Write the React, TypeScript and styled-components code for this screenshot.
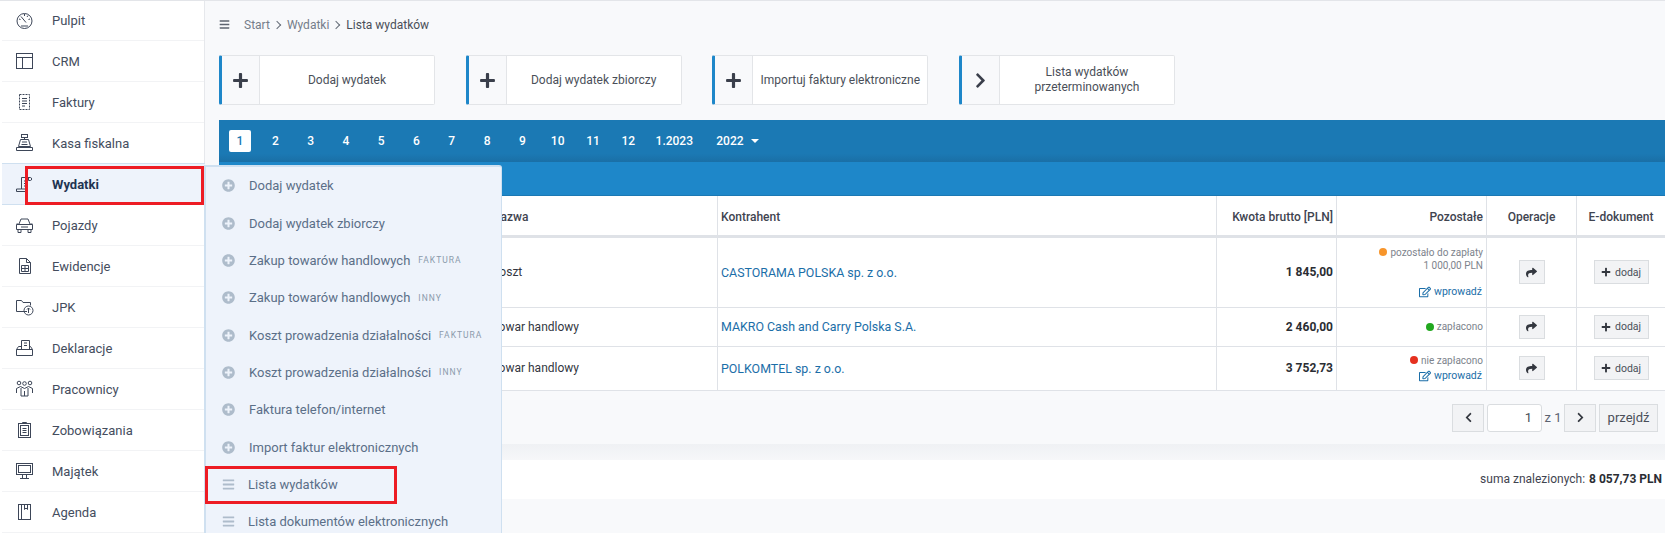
import * as React from "react";
import styled, { createGlobalStyle } from "styled-components";
import { FaPlus, FaPlusCircle, FaBars, FaShare, FaRegEdit, FaChevronLeft, FaChevronRight } from "react-icons/fa";

const GlobalStyle = createGlobalStyle`
    html, body {
        margin: 0;
        padding: 0;
        height: 533px;
        overflow: hidden;
        background: #f8f9fb;
    }
    body, button, input {
        font-family: Roboto, "Liberation Sans", sans-serif;
        font-size: 13px;
    }
`;

const Page = styled.div`
    display: flex;
    width: 1665px;
    height: 533px;
    overflow: hidden;
    position: relative;
    border-top: 1px solid #e3e5e9;
    box-sizing: border-box;
`;

const Sidebar = styled.nav`
    width: 205px;
    flex: none;
    box-sizing: border-box;
    background: #fff;
    border-right: 1px solid #e6e8ec;
    padding-left: 2px;
`;

const SideRow = styled.div<{ $active?: boolean }>`
    position: relative;
    height: 41px;
    box-sizing: border-box;
    display: flex;
    align-items: center;
    gap: 15px;
    padding-left: 10px;
    color: ${(p) => (p.$active ? "#1f3552" : "#444d5e")};
    font-weight: ${(p) => (p.$active ? 700 : 400)};
    background: ${(p) => (p.$active ? "#eef3fb" : "#fff")};
    border-bottom: 1px solid ${(p) => (p.$active ? "#cfe0f0" : "#f2f3f5")};
    box-shadow: ${(p) => (p.$active ? "0 -1px 0 #cfe0f0" : "none")};
    margin-right: ${(p) => (p.$active ? "-1px" : "0")};
    &:first-child {
        height: 40px;
    }
`;

const SideIcon = styled.svg`
    width: 25px;
    height: 20px;
    flex: none;
    fill: none;
    stroke: #3d4658;
    stroke-width: 1;
`;

const RedMark = styled.div<{ $left: number; $top: number; $width: number; $height: number }>`
    position: absolute;
    left: ${(p) => p.$left}px;
    top: ${(p) => p.$top}px;
    width: ${(p) => p.$width}px;
    height: ${(p) => p.$height}px;
    box-sizing: border-box;
    border: 3px solid #ed1c24;
    pointer-events: none;
    z-index: 5;
`;

const Main = styled.main`
    flex: 1;
    min-width: 0;
    padding-left: 14px;
    display: flex;
    flex-direction: column;
`;

const Breadcrumb = styled.div`
    height: 47px;
    display: flex;
    align-items: center;
    font-size: 12px;
    svg {
        color: #5d6470;
        font-size: 11px;
        margin-right: 14px;
    }
`;

const Crumb = styled.span<{ $current?: boolean }>`
    color: ${(p) => (p.$current ? "#4a4f59" : "#757d8a")};
`;

const CrumbSep = styled.span`
    margin: 0 7px 0 4px;
    width: 5px;
    height: 5px;
    border-top: 1px solid #666d78;
    border-right: 1px solid #666d78;
    transform: rotate(45deg);
`;

const Actions = styled.div`
    display: flex;
    gap: 30.67px;
    margin-top: 7px;
`;

const ActionButton = styled.div`
    width: 216px;
    height: 50px;
    box-sizing: border-box;
    display: flex;
    background: #fff;
    border: 1px solid #e3e5e8;
    border-left: 3px solid #1e87c9;
    border-radius: 2px;
    color: #4a4f59;
`;

const ActionIcon = styled.div`
    width: 37px;
    flex: none;
    display: flex;
    align-items: center;
    justify-content: center;
    background: #f8f9fb;
    border-right: 1px solid #e3e5e8;
    color: #3a3f4b;
    font-size: 17px;
`;

const ActionLabel = styled.div`
    flex: 1;
    display: flex;
    align-items: center;
    justify-content: center;
    text-align: center;
    font-size: 12px;
    line-height: 15px;
    padding: 0 4px;
`;

const MonthBar = styled.div`
    margin-top: 15px;
    height: 42px;
    flex: none;
    box-sizing: border-box;
    background: linear-gradient(#1b79b4 0, #1b79b4 80%, #1a6fa6 100%);
    display: flex;
    align-items: center;
    gap: 13.3px;
    padding-left: 10px;
    color: #fff;
    font-size: 12px;
    font-weight: 500;
`;

const Month = styled.div<{ $active?: boolean }>`
    min-width: 22px;
    height: 22px;
    padding: 0 3px;
    box-sizing: border-box;
    display: flex;
    align-items: center;
    justify-content: center;
    border-radius: 2px;
    background: ${(p) => (p.$active ? "#fff" : "transparent")};
    color: ${(p) => (p.$active ? "#1b79b4" : "#fff")};
`;

const YearToggle = styled.div`
    display: flex;
    align-items: center;
    gap: 7px;
    margin-left: 7px;
    &::after {
        content: "";
        border-left: 4px solid transparent;
        border-right: 4px solid transparent;
        border-top: 4px solid #fff;
    }
`;

const TableHead = styled.div`
    height: 34px;
    flex: none;
    background: #1e87c9;
    border-bottom: 1px solid #1b78b3;
    box-sizing: border-box;
`;

const Table = styled.table`
    table-layout: fixed;
    width: 1446px;
    flex: none;
    border-collapse: collapse;
    background: #fff;
    color: #33373f;
    font-size: 12px;
`;

const Th = styled.th<{ $align?: string }>`
    height: 40px;
    padding: 3px 3px 0;
    box-sizing: border-box;
    font-weight: 500;
    color: #3f4450;
    text-align: ${(p) => p.$align || "left"};
    border: solid #dfe2e7;
    border-width: 0 1px 3px 1px;
    font-size: 12px;
`;

const Td = styled.td<{ $align?: string; $height: number }>`
    height: ${(p) => p.$height}px;
    padding: 0 3px;
    text-align: ${(p) => p.$align || "left"};
    border: 1px solid #dfe2e7;
    border-top: 0;
`;

const PartnerLink = styled.span`
    color: #1b6ea8;
    font-size: 12.4px;
`;

const Amount = styled.span`
    font-weight: 700;
    color: #2a2d33;
`;

const StatusLine = styled.div`
    display: flex;
    justify-content: flex-end;
    align-items: center;
    gap: 3px;
    color: #7d838c;
    font-size: 10px;
    line-height: 13px;
`;

const Dot = styled.span<{ $color: string }>`
    width: 8px;
    height: 8px;
    border-radius: 50%;
    background: ${(p) => p.$color};
`;

const EnterLink = styled.div<{ $gap: number }>`
    display: flex;
    justify-content: flex-end;
    align-items: center;
    gap: 3px;
    margin-top: ${(p) => p.$gap}px;
    padding-right: 1px;
    color: #1b6ea8;
    font-size: 10.5px;
    line-height: 14px;
    svg {
        font-size: 12px;
    }
`;

const Btn = styled.div`
    display: inline-flex;
    align-items: center;
    justify-content: center;
    box-sizing: border-box;
    background: #f2f3f5;
    border: 1px solid #dadde0;
    color: #33373f;
    vertical-align: middle;
`;

const ShareBtn = styled(Btn)`
    width: 26px;
    height: 24px;
    font-size: 11px;
`;

const AddBtn = styled(Btn)`
    width: 55px;
    height: 24px;
    gap: 4px;
    font-size: 10.5px;
    color: #4a4f59;
    svg {
        font-size: 10px;
        color: #33373f;
    }
`;

const Pager = styled.div`
    height: 53px;
    flex: none;
    display: flex;
    align-items: center;
    justify-content: flex-end;
    gap: 3px;
    padding-right: 7px;
    padding-top: 1px;
    box-sizing: border-box;
    color: #5b6270;
`;

const PagerBtn = styled(Btn)<{ $wide?: boolean }>`
    width: ${(p) => (p.$wide ? 59 : 32)}px;
    height: 28px;
    font-size: ${(p) => (p.$wide ? 13 : 11)}px;
    color: ${(p) => (p.$wide ? "#4a4f59" : "#33373f")};
`;

const PageInput = styled.div`
    width: 55px;
    height: 28px;
    box-sizing: border-box;
    background: #fff;
    border: 1px solid #dadde0;
    border-radius: 3px;
    display: flex;
    align-items: center;
    justify-content: flex-end;
    padding-right: 9px;
    color: #4a4f59;
`;

const PagerOf = styled.span`
    margin: 0 -0.5px;
`;

const Fade = styled.div`
    height: 16px;
    flex: none;
    background: linear-gradient(#eff1f4, #f6f7f9);
`;

const Summary = styled.div`
    height: 39px;
    flex: none;
    background: #fff;
    display: flex;
    align-items: center;
    justify-content: flex-end;
    padding-right: 3px;
    font-size: 12px;
    color: #3f4450;
    b {
        margin-left: 4px;
        color: #2a2d33;
    }
`;

const Flyout = styled.div`
    position: absolute;
    left: 204px;
    top: 164px;
    width: 298px;
    height: 380px;
    box-sizing: border-box;
    background: #eef3fb;
    border: 2px solid #cfe0f0;
    border-right-width: 1px;
    border-radius: 0 3px 0 0;
    z-index: 3;
`;

const FlyItem = styled.div<{ $list?: boolean }>`
    height: 37.35px;
    display: flex;
    align-items: center;
    padding-left: 16px;
    color: #5b6f88;
    svg {
        flex: none;
        width: 13px;
        height: 13px;
        color: #aebccb;
        margin-right: ${(p) => (p.$list ? 13 : 14)}px;
    }
`;

const FlyTag = styled.span`
    margin-left: 8px;
    font-size: 8.5px;
    letter-spacing: 1px;
    color: #8b9aab;
`;

const icons: Record<string, React.ReactNode> = {
    pulpit: (
        <>
            <circle cx="12.5" cy="10" r="7.5" />
            <path d="M9 5.5l5 6M9 15h7M7 8l1.5.5M18 8l-1.5.5M12.5 3v2M16 4.5l-1 1.5" />
        </>
    ),
    crm: (
        <>
            <rect x="4.5" y="2.5" width="16" height="15" />
            <path d="M4.5 6.5h16M10.5 6.5v11" />
        </>
    ),
    faktury: (
        <>
            <rect x="7.5" y="2.5" width="10" height="15" strokeDasharray="2 1" />
            <path d="M10 6.5h5M10 9h5M10 11.5h5M10 14h3" />
        </>
    ),
    kasa: (
        <>
            <rect x="9.5" y="1.5" width="6" height="3" />
            <path d="M12.5 4.5v2M8.5 6.5h8l2 7h-12zM4.5 14.5h16v3h-16zM10 9h5M9.5 11.5h6" />
        </>
    ),
    wydatki: (
        <>
            <path d="M9.5 15V3.5h9M18.5 3.5c1.5 0 1.5 3 0 3h-2V3.5M9.5 15H4.5v2.5h9c1 0 1-2.5 0-2.5zM12 7h3M12 9.5h3M12 12h3" />
        </>
    ),
    pojazdy: (
        <>
            <path d="M7 9l2-5h7l2 5M4.5 9.5h16v5h-16zM6 14.5v3h3v-3M16 14.5v3h3v-3M4.5 9h2M18.5 9h2M9 12h7" />
        </>
    ),
    ewidencje: (
        <>
            <path d="M7.5 2.5h7l4 4v11h-11zM14.5 2.5v4h4M9.5 9.5h7v6h-7zM9.5 12.5h7M13 9.5v6" />
        </>
    ),
    jpk: (
        <>
            <path d="M15 14.5H4.5v-11h5l1.5 2h7.5v3" />
            <circle cx="16.5" cy="13.5" r="4.5" />
            <path d="M16.5 16v-5M15 12.5l1.5-1.5 1.5 1.5" />
        </>
    ),
    deklaracje: (
        <>
            <path d="M9.5 11V2.5h8V11M12 5h3M12 7.5h3M4.5 11.5h16v6h-16zM4.5 11.5l2-3h3M20.5 11.5l-2-3h-1" />
        </>
    ),
    pracownicy: (
        <>
            <circle cx="7" cy="4" r="1.8" />
            <circle cx="12.5" cy="4.5" r="1.8" />
            <circle cx="18" cy="4" r="1.8" />
            <path d="M4.5 14V9.5l4-2 4 2 4-2 4 2V14M9 9v8h7V9M12.5 12v5" />
        </>
    ),
    zobowiazania: (
        <>
            <rect x="6.5" y="3.5" width="12" height="14" />
            <rect x="8.5" y="5.5" width="8" height="10" />
            <path d="M10.5 3.5v-1h4v1M10.5 8.5h4M10.5 10.5h4M10.5 12.5h4" />
        </>
    ),
    majatek: (
        <>
            <rect x="4.5" y="2.5" width="16" height="11" />
            <rect x="6.5" y="4.5" width="12" height="7" />
            <path d="M10.5 13.5v4M14.5 13.5v4M8 17.5h9" />
        </>
    ),
    agenda: (
        <>
            <rect x="6.5" y="2.5" width="12" height="15" />
            <path d="M9.5 2.5v15M12.5 2.5v5l1.5-1.5 1.5 1.5v-5" />
        </>
    ),
};

const sideItems = [
    { key: "pulpit", label: "Pulpit" },
    { key: "crm", label: "CRM" },
    { key: "faktury", label: "Faktury" },
    { key: "kasa", label: "Kasa fiskalna" },
    { key: "wydatki", label: "Wydatki", active: true },
    { key: "pojazdy", label: "Pojazdy" },
    { key: "ewidencje", label: "Ewidencje" },
    { key: "jpk", label: "JPK" },
    { key: "deklaracje", label: "Deklaracje" },
    { key: "pracownicy", label: "Pracownicy" },
    { key: "zobowiazania", label: "Zobowiązania" },
    { key: "majatek", label: "Majątek" },
    { key: "agenda", label: "Agenda" },
];

const flyItems = [
    { label: "Dodaj wydatek" },
    { label: "Dodaj wydatek zbiorczy" },
    { label: "Zakup towarów handlowych", tag: "FAKTURA" },
    { label: "Zakup towarów handlowych", tag: "INNY" },
    { label: "Koszt prowadzenia działalności", tag: "FAKTURA" },
    { label: "Koszt prowadzenia działalności", tag: "INNY" },
    { label: "Faktura telefon/internet" },
    { label: "Import faktur elektronicznych" },
    { label: "Lista wydatków", list: true },
    { label: "Lista dokumentów elektronicznych", list: true },
];

const months = ["2", "3", "4", "5", "6", "7", "8", "9", "10", "11", "12", "1.2023"];

const Status = ({ color, text, extra }: { color: string; text: string; extra?: string }) => (
    <>
        <StatusLine>
            <Dot $color={color} />
            {text}
        </StatusLine>
        {extra ? <StatusLine>{extra}</StatusLine> : null}
    </>
);

const Enter = ({ gap }: { gap: number }) => (
    <EnterLink $gap={gap}>
        <FaRegEdit />
        wprowadź
    </EnterLink>
);

const rows = [
    {
        height: 69,
        name: "Koszt",
        partner: "CASTORAMA POLSKA sp. z o.o.",
        amount: "1 845,00",
        status: (
            <>
                <Status color="#f7952b" text="pozostało do zapłaty" extra="1 000,00 PLN" />
                <Enter gap={13} />
            </>
        ),
    },
    {
        height: 38,
        name: "Towar handlowy",
        partner: "MAKRO Cash and Carry Polska S.A.",
        amount: "2 460,00",
        status: <Status color="#22a81f" text="zapłacono" />,
    },
    {
        height: 43,
        name: "Towar handlowy",
        partner: "POLKOMTEL sp. z o.o.",
        amount: "3 752,73",
        status: (
            <>
                <Status color="#e5301f" text="nie zapłacono" />
                <Enter gap={2} />
            </>
        ),
    },
];

export default function App() {
    return (
        <Page>
            <GlobalStyle />
            <Sidebar>
                {sideItems.map((item) => (
                    <SideRow key={item.key} $active={item.active}>
                        <SideIcon viewBox="0 0 25 20">{icons[item.key]}</SideIcon>
                        {item.label}
                        {item.active ? <RedMark $left={23} $top={2} $width={179} $height={39} /> : null}
                    </SideRow>
                ))}
            </Sidebar>
            <Main>
                <Breadcrumb>
                    <FaBars />
                    <Crumb>Start</Crumb>
                    <CrumbSep />
                    <Crumb>Wydatki</Crumb>
                    <CrumbSep />
                    <Crumb $current>Lista wydatków</Crumb>
                </Breadcrumb>
                <Actions>
                    <ActionButton>
                        <ActionIcon>
                            <FaPlus />
                        </ActionIcon>
                        <ActionLabel>Dodaj wydatek</ActionLabel>
                    </ActionButton>
                    <ActionButton>
                        <ActionIcon>
                            <FaPlus />
                        </ActionIcon>
                        <ActionLabel>Dodaj wydatek zbiorczy</ActionLabel>
                    </ActionButton>
                    <ActionButton>
                        <ActionIcon>
                            <FaPlus />
                        </ActionIcon>
                        <ActionLabel>Importuj faktury elektroniczne</ActionLabel>
                    </ActionButton>
                    <ActionButton>
                        <ActionIcon>
                            <FaChevronRight />
                        </ActionIcon>
                        <ActionLabel>
                            Lista wydatków
                            <br />
                            przeterminowanych
                        </ActionLabel>
                    </ActionButton>
                </Actions>
                <MonthBar>
                    <Month $active>1</Month>
                    {months.map((m) => (
                        <Month key={m}>{m}</Month>
                    ))}
                    <YearToggle>2022</YearToggle>
                </MonthBar>
                <TableHead />
                <Table>
                    <colgroup>
                        <col style={{ width: 269 }} />
                        <col style={{ width: 229 }} />
                        <col style={{ width: 499 }} />
                        <col style={{ width: 120 }} />
                        <col style={{ width: 150 }} />
                        <col style={{ width: 90 }} />
                        <col style={{ width: 89 }} />
                    </colgroup>
                    <thead>
                        <tr>
                            <Th />
                            <Th>Nazwa</Th>
                            <Th>Kontrahent</Th>
                            <Th $align="right">Kwota brutto [PLN]</Th>
                            <Th $align="right">Pozostałe</Th>
                            <Th $align="center">Operacje</Th>
                            <Th $align="center">E-dokument</Th>
                        </tr>
                    </thead>
                    <tbody>
                        {rows.map((row) => (
                            <tr key={row.partner}>
                                <Td $height={row.height} />
                                <Td $height={row.height}>{row.name}</Td>
                                <Td $height={row.height}>
                                    <PartnerLink>{row.partner}</PartnerLink>
                                </Td>
                                <Td $height={row.height} $align="right">
                                    <Amount>{row.amount}</Amount>
                                </Td>
                                <Td $height={row.height}>{row.status}</Td>
                                <Td $height={row.height} $align="center">
                                    <ShareBtn>
                                        <FaShare />
                                    </ShareBtn>
                                </Td>
                                <Td $height={row.height} $align="center">
                                    <AddBtn>
                                        <FaPlus />
                                        dodaj
                                    </AddBtn>
                                </Td>
                            </tr>
                        ))}
                    </tbody>
                </Table>
                <Pager>
                    <PagerBtn>
                        <FaChevronLeft />
                    </PagerBtn>
                    <PageInput>1</PageInput>
                    <PagerOf>z 1</PagerOf>
                    <PagerBtn>
                        <FaChevronRight />
                    </PagerBtn>
                    <PagerBtn $wide>przejdź</PagerBtn>
                </Pager>
                <Fade />
                <Summary>
                    suma znalezionych:<b>8 057,73 PLN</b>
                </Summary>
            </Main>
            <Flyout>
                {flyItems.map((item) => (
                    <FlyItem key={item.label + (item.tag || "")} $list={item.list}>
                        {item.list ? <FaBars /> : <FaPlusCircle />}
                        {item.label}
                        {item.tag ? <FlyTag>{item.tag}</FlyTag> : null}
                    </FlyItem>
                ))}
                <RedMark $left={-1} $top={299} $width={192} $height={38} />
            </Flyout>
        </Page>
    );
}
